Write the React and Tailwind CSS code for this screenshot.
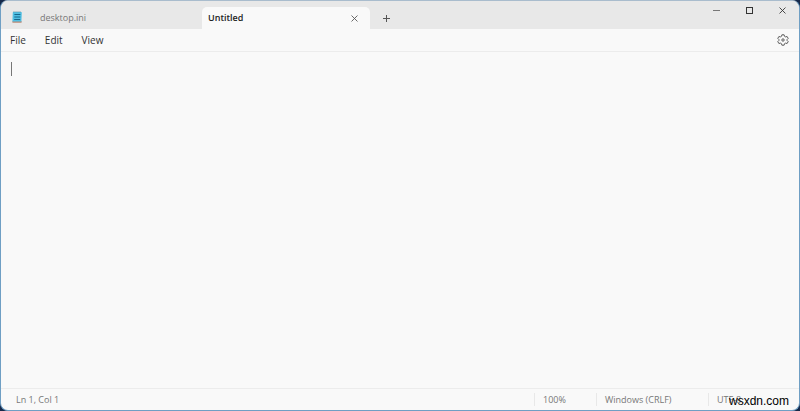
const menus = ['File', 'Edit', 'View']

/**
 * NotepadIcon Component
 *
 * Small app icon: a blue pad with ruled lines on a brown base.
 */
function NotepadIcon() {
  return (
    <svg className="h-3 w-3 shrink-0" viewBox="0 0 12 12" aria-hidden="true">
      <path d="M1.4 10h9.2v1.2a.6.6 0 0 1-.6.6H2a.6.6 0 0 1-.6-.6Z" fill="#b98a78" />
      <path d="M2.4 1h7.8a.6.6 0 0 1 .6.6L10.4 10.4H1.4L1.8 1.6a.6.6 0 0 1 .6-.6Z" fill="#4fbfe3" />
      <path d="M3 .2v1.4M5 .2v1.4M7 .2v1.4M9 .2v1.4" stroke="#5f8fa5" strokeWidth="0.8" />
      <path d="M3.4 3.5h6M3.3 6h6M3.2 8.5h6" stroke="#17678c" strokeWidth="1" />
    </svg>
  )
}

function CrossIcon({ className }) {
  return (
    <svg className={className} viewBox="0 0 8 8" fill="none" stroke="currentColor" aria-hidden="true">
      <path d="M.6.6l6.8 6.8M7.4.6L.6 7.4" strokeWidth="1" />
    </svg>
  )
}

function GearIcon() {
  return (
    <svg className="h-3 w-3" viewBox="0 0 12 12" fill="none" stroke="currentColor" strokeWidth="0.95" strokeLinejoin="round" aria-hidden="true">
      <path d="M4.9 .8h2.2l.4 1.5 1.1.6 1.5-.4 1.1 1.9-1.1 1.1v1l1.1 1.1-1.1 1.9-1.5-.4-1.1.6-.4 1.5H4.9l-.4-1.5-1.1-.6-1.5.4L.8 7.6l1.1-1.1v-1L.8 4.4l1.1-1.9 1.5.4 1.1-.6Z" />
      <circle cx="6" cy="6" r="1.2" />
    </svg>
  )
}

function TitleBar() {
  return (
    <header className="flex h-7 items-stretch justify-between bg-[#e8e8e8]">
      <div className="flex min-w-0 items-stretch">
        <div className="flex w-8 items-center justify-center pt-1">
          <NotepadIcon />
        </div>
        <div role="tablist" className="flex min-w-0 items-end">
          <button role="tab" aria-selected="false" className="h-[22px] w-[169px] px-[7px] text-left text-[9px] text-[#777]">
            desktop.ini
          </button>
          <div className="flex h-[22px] w-[168px] items-center rounded-t-[5px] bg-[#f9f9f9] pr-1.5">
            <button role="tab" aria-selected="true" className="flex-1 pl-1.5 text-left text-[9px] font-semibold text-[#222]">
              Untitled
            </button>
            <button aria-label="Close tab" className="flex h-5 w-5 items-center justify-center text-[#555]">
              <CrossIcon className="h-[7px] w-[7px]" />
            </button>
          </div>
        </div>
        <button aria-label="New tab" className="flex w-8 items-center justify-center pt-1.5 text-[#555]">
          <svg className="h-[7px] w-[7px]" viewBox="0 0 7 7" stroke="currentColor" aria-hidden="true">
            <path d="M3.5 0v7M0 3.5h7" />
          </svg>
        </button>
      </div>
      <div className="flex h-[18px] text-[#333]">
        <button aria-label="Minimize" className="flex w-[33px] items-center justify-center">
          <svg className="h-[7px] w-[7px]" viewBox="0 0 7 7" stroke="#777" aria-hidden="true">
            <path d="M0 3.5h7" />
          </svg>
        </button>
        <button aria-label="Maximize" className="flex w-[33px] items-center justify-center">
          <svg className="h-[7px] w-[7px]" viewBox="0 0 7 7" fill="none" stroke="currentColor" aria-hidden="true">
            <rect x="0.5" y="0.5" width="6" height="6" />
          </svg>
        </button>
        <button aria-label="Close" className="flex w-[33px] items-center justify-center">
          <CrossIcon className="h-[7px] w-[7px]" />
        </button>
      </div>
    </header>
  )
}

function MenuBar() {
  return (
    <nav className="flex h-[23px] items-center justify-between border-b border-[#ececec] pr-2.5 pl-[9px]">
      <div className="flex gap-[19px]">
        {menus.map(menu => (
          <button key={menu} className="text-[10px] text-[#333]">
            {menu}
          </button>
        ))}
      </div>
      <button aria-label="Settings" className="text-[#555]">
        <GearIcon />
      </button>
    </nav>
  )
}

function StatusBar() {
  return (
    <footer className="flex h-[22px] items-center border-t border-[#ececec] text-[9px] text-[#777]">
      <span className="flex-1 pl-[15px]">Ln 1, Col 1</span>
      <span className="w-[62px] border-l border-[#e8e8e8] pl-2">100%</span>
      <span className="w-28 border-l border-[#e8e8e8] pl-2">Windows (CRLF)</span>
      <span className="w-[91px] border-l border-[#e8e8e8] pl-2">UTF-8</span>
    </footer>
  )
}

export default function App() {
  return (
    <div className="min-h-screen bg-[#16294a] font-['Open_Sans',sans-serif]">
      <div className="relative flex min-h-screen flex-col overflow-hidden rounded-lg border border-t-[#a9bccd] border-r-[#6f9fc4] border-b-[#6f9fc4] border-l-[#6f9fc4] bg-[#f9f9f9]">
        <TitleBar />
        <MenuBar />
        <main className="relative flex flex-1">
          <textarea aria-label="Document text" className="flex-1 resize-none bg-transparent px-2.5 py-2 text-[11px] text-[#222] outline-none" />
          {/* text caret */}
          <span className="absolute top-2.5 left-2.5 h-3.5 w-px bg-[#777]" />
        </main>
        <StatusBar />
        <span className="absolute right-2.5 bottom-px font-['Liberation_Sans',sans-serif] text-xs text-black">wsxdn.com</span>
      </div>
    </div>
  )
}
